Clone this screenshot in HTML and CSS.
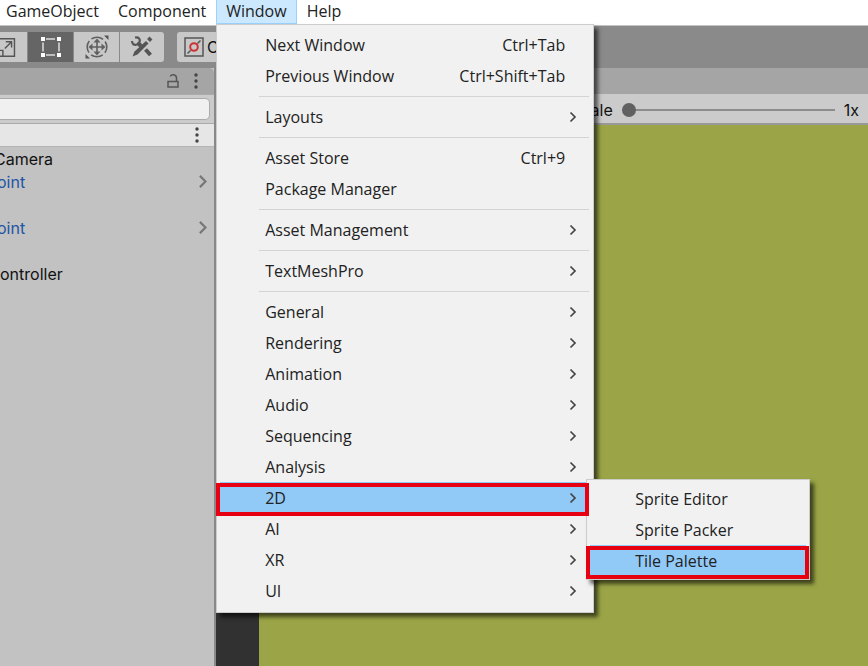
FILE: index.html
```html
<!DOCTYPE html>
<html lang="en">
<head>
<meta charset="utf-8">
<title>Editor</title>
<link rel="stylesheet" href="styles.css">
</head>
<body>
<svg class="defs" aria-hidden="true">
  <symbol id="chevron" viewBox="0 0 8 12"><path d="M1.500 1.500 6 6l-4.500 4.500" fill="none" stroke="currentColor" stroke-width="1.700"/></symbol>
  <symbol id="dots" viewBox="0 0 4 16"><circle cx="2" cy="2" r="1.700"/><circle cx="2" cy="8" r="1.700"/><circle cx="2" cy="14" r="1.700"/></symbol>
</svg>

<nav class="menubar">
  <button type="button">GameObject</button>
  <button type="button">Component</button>
  <div class="menu-root">
    <button type="button" class="open">Window</button>
    <ul class="menu">
      <li><button type="button">Next Window<kbd>Ctrl+Tab</kbd></button></li>
      <li><button type="button">Previous Window<kbd>Ctrl+Shift+Tab</kbd></button></li>
      <li class="sep"></li>
      <li><button type="button">Layouts<svg class="arrow"><use href="#chevron"/></svg></button></li>
      <li class="sep"></li>
      <li><button type="button">Asset Store<kbd>Ctrl+9</kbd></button></li>
      <li><button type="button">Package Manager</button></li>
      <li class="sep"></li>
      <li><button type="button">Asset Management<svg class="arrow"><use href="#chevron"/></svg></button></li>
      <li class="sep"></li>
      <li><button type="button">TextMeshPro<svg class="arrow"><use href="#chevron"/></svg></button></li>
      <li class="sep"></li>
      <li><button type="button">General<svg class="arrow"><use href="#chevron"/></svg></button></li>
      <li><button type="button">Rendering<svg class="arrow"><use href="#chevron"/></svg></button></li>
      <li><button type="button">Animation<svg class="arrow"><use href="#chevron"/></svg></button></li>
      <li><button type="button">Audio<svg class="arrow"><use href="#chevron"/></svg></button></li>
      <li><button type="button">Sequencing<svg class="arrow"><use href="#chevron"/></svg></button></li>
      <li><button type="button">Analysis<svg class="arrow"><use href="#chevron"/></svg></button></li>
      <li class="marked">
        <button type="button">2D<svg class="arrow"><use href="#chevron"/></svg></button>
        <ul class="menu submenu">
          <li><button type="button">Sprite Editor</button></li>
          <li><button type="button">Sprite Packer</button></li>
          <li class="marked"><button type="button">Tile Palette</button></li>
        </ul>
      </li>
      <li><button type="button">AI<svg class="arrow"><use href="#chevron"/></svg></button></li>
      <li><button type="button">XR<svg class="arrow"><use href="#chevron"/></svg></button></li>
      <li><button type="button">UI<svg class="arrow"><use href="#chevron"/></svg></button></li>
    </ul>
  </div>
  <button type="button">Help</button>
</nav>

<div class="toolbar">
  <button type="button" class="tool first" aria-label="Scale">
    <svg width="28" height="28" viewBox="0 0 28 28" fill="none" stroke="#555" stroke-width="1.500"><path d="M0 5.500h15v18H0M0 17.500h3v6M5 15.500l7-7M6 8.500h6v6"/></svg>
  </button>
  <button type="button" class="tool active" aria-label="Rect">
    <svg width="22" height="22" viewBox="0 0 22 22" fill="#fff" stroke="#ddd"><path d="M6 3h9M6 19h9M3 6.500v9M19 6.500v9" stroke-width="1.500"/><path d="M1 1h4v4H1zM17 1h4v4h-4zM1 17h4v4H1zM17 17h4v4h-4z" stroke="none"/></svg>
  </button>
  <button type="button" class="tool" aria-label="Transform">
    <svg width="24" height="24" viewBox="0 0 24 24" fill="none" stroke="#606060" stroke-width="1.600"><circle cx="12" cy="12" r="9.800" stroke-dasharray="12.400 3" stroke-dashoffset="6.200"/><path d="M12 5v14M5 12h14"/><path d="m12 3.500 3.500 4h-7zM12 20.500l3.500-4h-7zM3.500 12l4-3.500v7zM20.500 12l-4-3.500v7z" fill="#606060" stroke="none"/><path d="M19 0.500h4.500V5zM0.500 19v4.500H5z" fill="#555" stroke="none"/></svg>
  </button>
  <button type="button" class="tool last" aria-label="Custom tools">
    <svg width="24" height="24" viewBox="0 0 24 24" fill="none" stroke="#555"><path d="m8 8 3 3M15.500 14.500l5 5.500" stroke-width="4"/><path d="M5 2.500c4-.5 5.500 1.500 4.500 4.500L7 9.500C4 10.500 2 9 2 6" stroke-width="2.200"/><path d="m2.500 21.500 2-5L16 6l2.500 2.500-11 11z" fill="#555" stroke="none"/><path d="m18.500 5.500 2.500-2.500" stroke-width="4"/></svg>
  </button>
  <button type="button" class="tool pivot">
    <svg width="20" height="20" viewBox="0 0 20 20" fill="none" stroke="#555" stroke-width="1.500"><path d="M1 1h18v18H1zM3.500 16.500l3-3M13.500 6.500l3-3"/><circle cx="10" cy="10" r="3.800" stroke="#c33" stroke-width="2"/></svg>
    C
  </button>
</div>

<main class="workspace">
  <section class="hierarchy">
    <div class="tabs">
      <svg width="12" height="14" viewBox="0 0 12 14" fill="none" stroke="#555" stroke-width="1.500"><path d="M1 7.500h10v5.500H1zM9.500 7.500V4c0-4-6-4-6-1.500"/></svg>
      <svg class="dots"><use href="#dots"/></svg>
    </div>
    <div class="search"><input type="text" aria-label="Search"></div>
    <div class="scene-row"><svg class="dots"><use href="#dots"/></svg></div>
    <ul class="tree">
      <li class="camera">Camera</li>
      <li class="prefab">oint<svg class="arrow"><use href="#chevron"/></svg></li>
      <li></li>
      <li class="prefab">oint<svg class="arrow"><use href="#chevron"/></svg></li>
      <li></li>
      <li>ontroller</li>
    </ul>
  </section>
  <section class="game">
    <div class="tabs"></div>
    <div class="scale-bar">
      <label for="scale">ale</label>
      <input id="scale" type="range" min="1" max="5" value="1">
      <output for="scale">1x</output>
    </div>
    <div class="view"><div class="canvas"></div></div>
  </section>
</main>
</body>
</html>
```
FILE: styles.css
```css
* { box-sizing: border-box; }

body {
  margin: 0;
  height: 100vh;
  display: flex;
  flex-direction: column;
  overflow: hidden;
  background: #8a8a8a;
  color: #111;
  font: 16px/22px Inter, "Liberation Sans", sans-serif;
}

button { margin: 0; border: 0; padding: 0; background: none; color: inherit; font: inherit; }
ul { margin: 0; padding: 0; list-style: none; }
.defs { position: absolute; width: 0; height: 0; }

.menubar {
  display: flex;
  height: 26px;
  padding-bottom: 3px;
  background: #fff;
  border-bottom: 1px solid #c4c4c4;
  color: #222;
  font: 16px/22px "Open Sans", "Noto Sans", sans-serif;
}
.menubar > button { padding: 0 10px; }
.menubar > button:first-child { padding: 0 9px 0 6px; }
.menu-root { position: relative; }
.open { height: 24px; padding: 0 9px 2px; background: #cce8ff; border: 1px solid #99d1ff; border-top: 0; }

.menu {
  position: absolute;
  z-index: 2;
  top: 24px;
  left: 0;
  width: 378px;
  padding: 4px 3px 6px;
  background: #f1f1f1;
  border: 1px solid #ccc;
  box-shadow: 4px 4px 4px rgba(0, 0, 0, .6);
}
.menu li { position: relative; }
.menu button {
  display: flex;
  align-items: center;
  width: 100%;
  height: 31px;
  padding: 0 13px 0 45px;
  text-align: left;
}
.menu kbd { margin-left: auto; margin-right: 12px; font: inherit; }
.menu .sep { height: 1px; margin: 5px 1px 4px 39px; background: #d4d4d4; }
.arrow { width: 8px; height: 12px; margin-left: auto; color: #444; }
.menu .marked > button { background: #91c9f7; }
.menu .marked::after {
  content: "";
  position: absolute;
  z-index: 3;
  inset: 1px 1px -3px -4px;
  border: 4px solid #e60012;
  pointer-events: none;
}
.menu .submenu { top: -3px; left: 366px; width: 224px; padding: 3px; }
.menu .submenu .marked::after { right: -3px; }

.toolbar { display: flex; height: 42px; padding: 6px 0; }
.tool {
  display: flex;
  align-items: center;
  justify-content: center;
  width: 45px;
  height: 30px;
  margin-right: 1px;
  background: #c8c8c8;
}
.first { width: 27px; justify-content: flex-start; }
.active { background: #656565; }
.last { width: 44px; border-radius: 0 3px 3px 0; }
.pivot { width: 90px; margin-left: 12px; padding-left: 7px; gap: 3px; justify-content: flex-start; border-radius: 3px 0 0 3px; }

.workspace { display: flex; flex: 1; gap: 2px; min-height: 0; }
.tabs {
  display: flex;
  align-items: center;
  justify-content: flex-end;
  gap: 15px;
  height: 26px;
  padding-right: 16px;
  background: #a5a5a5;
}
.dots { width: 4px; height: 16px; fill: #444; }
.hierarchy { width: 214px; background: #c2c2c2; }
.hierarchy .tabs { border-radius: 0 5px 0 0; }
.search { height: 30px; padding: 3px 4px 3px 0; background: #cbcbcb; border: 1px solid #aaa; border-width: 1px 0; }
.search input {
  display: block;
  width: 100%;
  height: 22px;
  border: 1px solid #aaa;
  border-left: 0;
  border-radius: 0 5px 5px 0;
  background: #f0f0f0;
}
.scene-row { display: flex; align-items: center; justify-content: flex-end; height: 23px; padding-right: 15px; background: #e6e6e6; border-bottom: 1px solid #b5b5b5; }
.tree li { display: flex; align-items: center; height: 23px; padding-right: 6px; }
.tree .camera { margin-left: -6px; }
.tree .prefab { margin-left: -3px; color: #1f55a5; }
.tree .arrow { width: 10px; height: 15px; color: #777; }

.game { display: flex; flex: 1; flex-direction: column; }
.scale-bar {
  display: flex;
  align-items: center;
  justify-content: flex-end;
  gap: 9px;
  height: 31px;
  padding-top: 2px;
  padding-right: 9px;
  background: #cbcbcb;
  border-bottom: 2px solid #999;
}
#scale { appearance: none; width: 213px; height: 14px; margin: 0; background: linear-gradient(#8c8c8c, #8c8c8c) center / 100% 2px no-repeat; }
#scale::-webkit-slider-thumb { appearance: none; width: 14px; height: 14px; border-radius: 50%; background: #616161; }
.view { display: flex; flex: 1; padding-left: 43px; background: #313131; }
.canvas { flex: 1; background: #9ba547; }
```
